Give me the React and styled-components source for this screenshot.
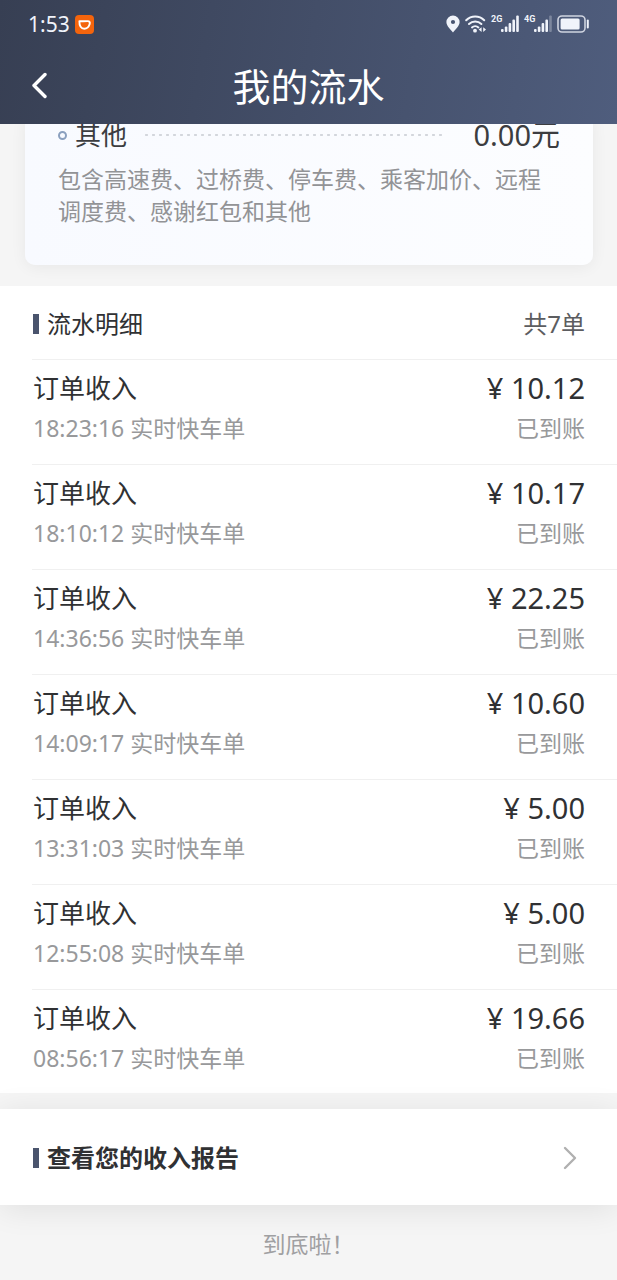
import React from "react";
import styled, { createGlobalStyle } from "styled-components";

const cjk = `"Noto Sans", "Noto Sans CJK SC", sans-serif`;

const GlobalStyle = createGlobalStyle`
    * {
        box-sizing: border-box;
    }

    body {
        margin: 0;
        background-color: #f5f5f5;
        color: #303133;
        font-family: ${cjk};
    }

    h1, h2, p, ul {
        margin: 0;
        padding: 0;
        font-weight: 400;
    }

    ul {
        list-style: none;
    }
`

const Page = styled.div`
    min-height: 100vh;
    overflow: hidden;
`

const Header = styled.header`
    position: sticky;
    top: 0;
    z-index: 2;
    color: #fff;
    background: linear-gradient(100deg, #373f53 0%, #434e68 50%, #4f5d7d 100%);
`

const StatusBar = styled.div`
    display: flex;
    justify-content: space-between;
    align-items: center;
    height: 48px;
    padding: 0 28px;
    color: #f0f3fa;
`

const StatusGroup = styled.div`
    display: flex;
    align-items: center;
    gap: 5px;
`

const Clock = styled.time`
    font-size: 21px;
    line-height: 24px;
`

const Signal = styled.div`
    display: flex;
    align-items: flex-start;

    & span {
        width: 10px;
        font-family: Roboto, sans-serif;
        font-size: 9px;
        line-height: 9px;
        font-weight: 700;
    }
`

const NavBar = styled.div`
    display: grid;
    grid-template-columns: 80px 1fr 80px;
    align-items: center;
    height: 76px;
`

const BackButton = styled.button`
    display: flex;
    width: 48px;
    height: 48px;
    margin-left: 16px;
    padding: 0;
    align-items: center;
    justify-content: center;
    border: 0;
    background: none;
    color: #fff;
`

const Title = styled.h1`
    font-size: 38px;
    line-height: 76px;
    text-align: center;
`

const Card = styled.section`
    margin: -10px 24px 21px 25px;
    padding: 0 33px 38px;
    border-radius: 10px;
    background: linear-gradient(90deg, #f8faff, #fcfdff);
    box-shadow: 0 2px 16px rgba(0, 0, 0, 0.06);
`

const FeeRow = styled.div`
    display: flex;
    align-items: center;
    height: 42px;
    color: #3c3d40;
`

const Ring = styled.span`
    width: 9px;
    height: 9px;
    margin-right: 8px;
    border: 2px solid #8ba0bf;
    border-radius: 50%;
`

const FeeName = styled.span`
    font-size: 26px;
    line-height: 42px;
`

const Dots = styled.span`
    flex: 1;
    height: 2px;
    margin: 0 28px 0 16px;
    background: radial-gradient(circle, #d3d6dc 1px, transparent 2px) 0 0 / 7px 2px repeat-x;
`

const FeeAmount = styled.span`
    font-size: 29px;
    line-height: 42px;
`

const FeeNote = styled.p`
    margin-top: 7px;
    color: #929396;
    font-size: 23px;
    line-height: 32px;
`

const Panel = styled.section`
    background-color: #fff;
`

const PanelHead = styled.div`
    display: flex;
    align-items: center;
    justify-content: space-between;
    height: 73px;
    padding: 2px 32px 0 33px;
`

const Heading = styled.h2`
    display: flex;
    align-items: center;
    gap: 8px;
    font-size: 24px;
    line-height: 36px;
    font-weight: ${props => props.$bold ? 700 : 400};

    &::before {
        content: "";
        width: 6px;
        height: 20px;
        background-color: #4a546d;
    }
`

const Count = styled.span`
    color: #5c5d60;
    font-size: 24px;
    line-height: 36px;
`

const OrderRow = styled.li`
    display: grid;
    grid-template-columns: 1fr auto;
    margin-left: 32px;
    padding: 8px 32px 16px 1px;
    border-top: 1px solid #f0f0f0;

    &:last-child {
        padding-bottom: 15px;
    }
`

const OrderName = styled.span`
    font-size: 26px;
    line-height: 40px;
`

const Amount = styled.span`
    font-size: 29px;
    line-height: 40px;
    text-align: right;
`

const Muted = styled.span`
    color: #98999b;
    font-size: 23px;
    line-height: 40px;
`

const Status = styled(Muted)`
    text-align: right;
`

const ReportLink = styled.a`
    display: flex;
    align-items: center;
    justify-content: space-between;
    height: 96px;
    margin-top: 16px;
    padding: 2px 40px 0 33px;
    color: #303133;
    background-color: #fff;
    box-shadow: 0 4px 32px rgba(0, 0, 0, 0.09);
    text-decoration: none;
`

const End = styled.p`
    padding: 20px 0 16px;
    color: #a0a0a2;
    font-size: 23px;
    line-height: 38px;
    text-align: center;
`

const orders = [
    { time: "18:23:16", amount: "10.12" },
    { time: "18:10:12", amount: "10.17" },
    { time: "14:36:56", amount: "22.25" },
    { time: "14:09:17", amount: "10.60" },
    { time: "13:31:03", amount: "5.00" },
    { time: "12:55:08", amount: "5.00" },
    { time: "08:56:17", amount: "19.66" },
]

function AppBadge() {
    return (
        <svg width="19" height="19" viewBox="0 0 19 19" aria-hidden="true">
            <rect width="19" height="19" rx="4" fill="#f4640c" />
            <path d="M4.4 6.1C7.5 6.3 10 6.2 12.8 6.1C14.6 6.1 15.2 7.3 14.6 9.2C13.7 12 12 13.7 9.3 13.7C6.2 13.7 4.2 11 4.4 6.1Z" fill="none" stroke="#fff" strokeWidth="1.9" strokeLinejoin="round" />
        </svg>
    )
}

function PinIcon() {
    return (
        <svg width="14" height="18" viewBox="0 0 14 18" aria-hidden="true">
            <path fillRule="evenodd" d="M7 0.5A6.6 6.6 0 0 0 0.4 7.1C0.4 11 4.4 14.2 7 17.6C9.6 14.2 13.6 11 13.6 7.1A6.6 6.6 0 0 0 7 0.5ZM7 4.9A2.1 2.1 0 1 1 7 9.1A2.1 2.1 0 1 1 7 4.9Z" fill="currentColor" />
        </svg>
    )
}

function WifiIcon() {
    return (
        <svg width="21" height="18" viewBox="0 0 21 18" aria-hidden="true">
            <g fill="none" stroke="currentColor" strokeWidth="2" strokeLinecap="round">
                <path d="M1.2 5.2C6.2 0.2 14.2 0.2 19.2 5.2" />
                <path d="M4 9C7.6 5.5 12.8 5.5 16.4 9" />
                <path d="M7 12.4C8.8 10.7 11.6 10.7 13.4 12.4" />
            </g>
            <circle cx="10" cy="15.7" r="1.9" fill="currentColor" />
            <path d="M16.6 12.2V17L13.6 14.6ZM18.2 12.2V17L21 14.6Z" fill="currentColor" />
        </svg>
    )
}

function SignalBars({ label, weak }) {
    return (
        <Signal>
            <span>{label}</span>
            <svg width="18" height="18" viewBox="0 0 18 18" aria-hidden="true" fill="currentColor">
                <rect x="0" y="14" width="2.6" height="3" rx="1" />
                <rect x="3.8" y="11.5" width="2.6" height="5.5" rx="1" />
                <rect x="7.6" y="8" width="2.6" height="9" rx="1" />
                <rect x="11.4" y="4.5" width="2.6" height="12.5" rx="1" />
                <rect x="15.2" y="0.5" width="2.6" height="16.5" rx="1" opacity={weak ? 0.3 : 1} />
            </svg>
        </Signal>
    )
}

function BatteryIcon() {
    return (
        <svg width="32" height="18" viewBox="0 0 32 18" aria-hidden="true">
            <rect x="1" y="1" width="27" height="16" rx="4" fill="none" stroke="currentColor" strokeWidth="1.6" opacity="0.8" />
            <rect x="3.6" y="3.6" width="19" height="10.8" rx="1.5" fill="currentColor" />
            <path d="M30.8 5.5V12.5" stroke="currentColor" strokeWidth="2" strokeLinecap="round" />
        </svg>
    )
}

function App() {
    return (
        <Page>
            <GlobalStyle />
            <Header>
                <StatusBar>
                    <StatusGroup>
                        <Clock>1:53</Clock>
                        <AppBadge />
                    </StatusGroup>
                    <StatusGroup>
                        <PinIcon />
                        <WifiIcon />
                        <SignalBars label="2G" />
                        <SignalBars label="4G" weak />
                        <BatteryIcon />
                    </StatusGroup>
                </StatusBar>
                <NavBar>
                    <BackButton aria-label="返回">
                        <svg width="16" height="28" viewBox="0 0 16 28" aria-hidden="true">
                            <path d="M13 2.5L2 13.5L13 24.5" fill="none" stroke="currentColor" strokeWidth="3.4" strokeLinecap="round" strokeLinejoin="round" />
                        </svg>
                    </BackButton>
                    <Title>我的流水</Title>
                </NavBar>
            </Header>
            <main>
                <Card>
                    <FeeRow>
                        <Ring />
                        <FeeName>其他</FeeName>
                        <Dots />
                        <FeeAmount>0.00元</FeeAmount>
                    </FeeRow>
                    <FeeNote>包含高速费、过桥费、停车费、乘客加价、远程调度费、感谢红包和其他</FeeNote>
                </Card>
                <Panel>
                    <PanelHead>
                        <Heading>流水明细</Heading>
                        <Count>共{orders.length}单</Count>
                    </PanelHead>
                    <ul>
                        {orders.map(order => (
                            <OrderRow key={order.time}>
                                <OrderName>订单收入</OrderName>
                                <Amount>¥ {order.amount}</Amount>
                                <Muted>{order.time} 实时快车单</Muted>
                                <Status>已到账</Status>
                            </OrderRow>
                        ))}
                    </ul>
                </Panel>
                <ReportLink href="#report">
                    <Heading $bold>查看您的收入报告</Heading>
                    <svg width="14" height="24" viewBox="0 0 14 24" aria-hidden="true">
                        <path d="M2 2L12 12L2 22" fill="none" stroke="#b0b0b0" strokeWidth="2.4" strokeLinecap="round" strokeLinejoin="round" />
                    </svg>
                </ReportLink>
                <End>到底啦！</End>
            </main>
        </Page>
    )
}

export default App;
